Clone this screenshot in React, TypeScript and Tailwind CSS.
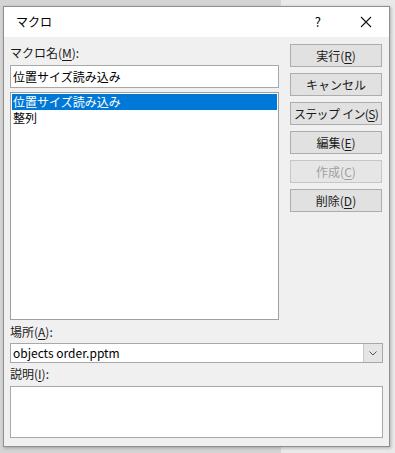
import React, { useState } from 'react';

const font = "font-['Noto_Sans_CJK_JP','Noto_Sans',sans-serif]";
const btnCls = "h-[23px] w-[92px] flex items-center justify-center bg-[#e1e1e1] border border-[#adadad] text-[12px] text-[#1a1a1a] leading-none whitespace-nowrap";
const btnDisabledCls = "h-[23px] w-[92px] flex items-center justify-center bg-[#e6e6e6] border border-[#c6c6c6] text-[12px] text-[#a0a0a0] leading-none";
const labelCls = "text-[12px] text-[#1a1a1a] leading-none";

const macros = ['位置サイズ読み込み', '整列'];

const Key: React.FC<{ k: string }> = ({ k }) => <span className="underline underline-offset-2">{k}</span>;

const App: React.FC = () => {
  const [selected, setSelected] = useState(0);

  return (
    <div className={`w-[395px] h-[453px] overflow-hidden bg-[linear-gradient(to_right,#d4d4d4_281px,#e9e9e9_281px)] pt-[6px] pl-[3px] ${font}`}>
      <div className="w-[387px] h-[441px] flex flex-col bg-[#f0f0f0] border border-[#8f8f8f] shadow-[1px_1px_3px_rgba(0,0,0,0.25)]">

        {/* Title bar */}
        <div className="h-[30px] bg-white flex items-center shrink-0">
          <span className="ml-[12px] text-[12px] text-black">マクロ</span>
          <span className="ml-auto mr-[39px] text-[13px] text-black">?</span>
          <svg width="12" height="12" viewBox="0 0 12 12" className="mr-[17px]">
            <path d="M1 1 L11 11 M11 1 L1 11" stroke="#111" strokeWidth="1.1" />
          </svg>
        </div>

        {/* Body */}
        <div className="flex flex-col px-[6px] pt-[9px]">
          <div className="flex">
            <div className="flex flex-col w-[269px]">
              <div className={`${labelCls} h-[15px] mt-[1px]`}>マクロ名(<Key k="M" />):</div>
              <div className="mt-[3px] h-[23px] bg-white border border-[#a8a8a8] flex items-center px-[2px] text-[12px] text-black">
                位置サイズ読み込み
              </div>
              <div className="mt-[4px] h-[228px] bg-white border border-[#a0a0a0] p-[1px] flex flex-col">
                {macros.map((m, i) => (
                  <div
                    key={m}
                    onClick={() => setSelected(i)}
                    className={`h-[16px] px-[1px] flex items-center text-[12px] leading-none ${i === selected ? 'bg-[#0078d7] text-white' : 'text-black'}`}
                  >
                    {m}
                  </div>
                ))}
              </div>
            </div>

            <div className="flex flex-col gap-[6px] ml-[11px]">
              <button className={`${btnCls} mt-[-2px]`}>実行(<Key k="R" />)</button>
              <button className={btnCls}>キャンセル</button>
              <button className={`${btnCls} text-[11px] tracking-[-0.7px]`}>
                ステップ<span className="w-[3px] inline-block" />イン(<Key k="S" />)
              </button>
              <button className={btnCls}>編集(<Key k="E" />)</button>
              <button className={btnDisabledCls} disabled>作成(<Key k="C" />)</button>
              <button className={btnCls}>削除(<Key k="D" />)</button>
            </div>
          </div>

          <div className={`${labelCls} mt-[6px] h-[15px]`}>場所(<Key k="A" />):</div>
          <div className="mt-[2px] h-[20px] w-[373px] bg-white border border-[#a8a8a8] flex items-center text-[12px] text-black">
            <span className="px-[2px]">objects order.pptm</span>
            <div className="ml-auto h-[18px] w-[19px] bg-[#e5e5e5] border-l border-[#c8c8c8] flex items-center justify-center">
              <svg width="8" height="5" viewBox="0 0 8 5">
                <path d="M0.5 0.5 L4 4 L7.5 0.5" stroke="#555" strokeWidth="1" fill="none" />
              </svg>
            </div>
          </div>

          <div className={`${labelCls} mt-[5px] h-[15px]`}>説明(<Key k="I" />):</div>
          <div className="mt-[3px] h-[52px] w-[373px] bg-white border border-[#a8a8a8]" />
        </div>
      </div>
    </div>
  );
};

export default App;
